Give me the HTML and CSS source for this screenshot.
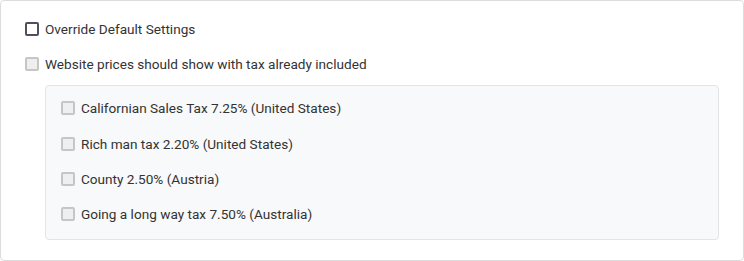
FILE: index.html
```html
<!DOCTYPE html>
<html>
<head>
<meta charset="utf-8">
<link rel="stylesheet" href="styles.css">
</head>
<body>
<div class="card">
  <label class="row">
    <span class="box box-active"></span>
    <span class="label">Override Default Settings</span>
  </label>
  <label class="row">
    <span class="box box-disabled"></span>
    <span class="label">Website prices should show with tax already included</span>
  </label>
  <div class="panel">
    <label class="item">
      <span class="box box-disabled"></span>
      <span class="label">Californian Sales Tax 7.25% (United States)</span>
    </label>
    <label class="item">
      <span class="box box-disabled"></span>
      <span class="label">Rich man tax 2.20% (United States)</span>
    </label>
    <label class="item">
      <span class="box box-disabled"></span>
      <span class="label">County 2.50% (Austria)</span>
    </label>
    <label class="item">
      <span class="box box-disabled"></span>
      <span class="label">Going a long way tax 7.50% (Australia)</span>
    </label>
  </div>
</div>
</body>
</html>
```

FILE: styles.css
```css
html, body {
  margin: 0;
  padding: 0;
  background: #ffffff;
}
body {
  font-family: Roboto, "Liberation Sans", Arial, sans-serif;
  font-size: 13.6px;
  color: #333333;
}
.card {
  box-sizing: border-box;
  width: 744px;
  height: 261px;
  border: 1px solid #dcdcdc;
  border-radius: 4px;
  padding: 11px 24px 20px 24px;
  display: flex;
  flex-direction: column;
}
.row {
  display: flex;
  align-items: center;
  height: 36px;
  gap: 6px;
}
.box {
  box-sizing: border-box;
  width: 14px;
  height: 14px;
  border-radius: 2px;
  flex: none;
}
.box-active {
  border: 2px solid #50505c;
  background: #fff;
}
.box-disabled {
  border: 2px solid #c6c6c8;
  background: #efeff0;
}
.label {
  line-height: 16px;
}
.panel {
  margin: 3px 0 0 20px;
  border: 1px solid #e3e4e6;
  border-radius: 4px;
  background: #f8f9fa;
  padding: 5px 15px 7px 15px;
  display: flex;
  flex-direction: column;
}
.item {
  display: flex;
  align-items: center;
  height: 35.33px;
  gap: 6px;
}
```
